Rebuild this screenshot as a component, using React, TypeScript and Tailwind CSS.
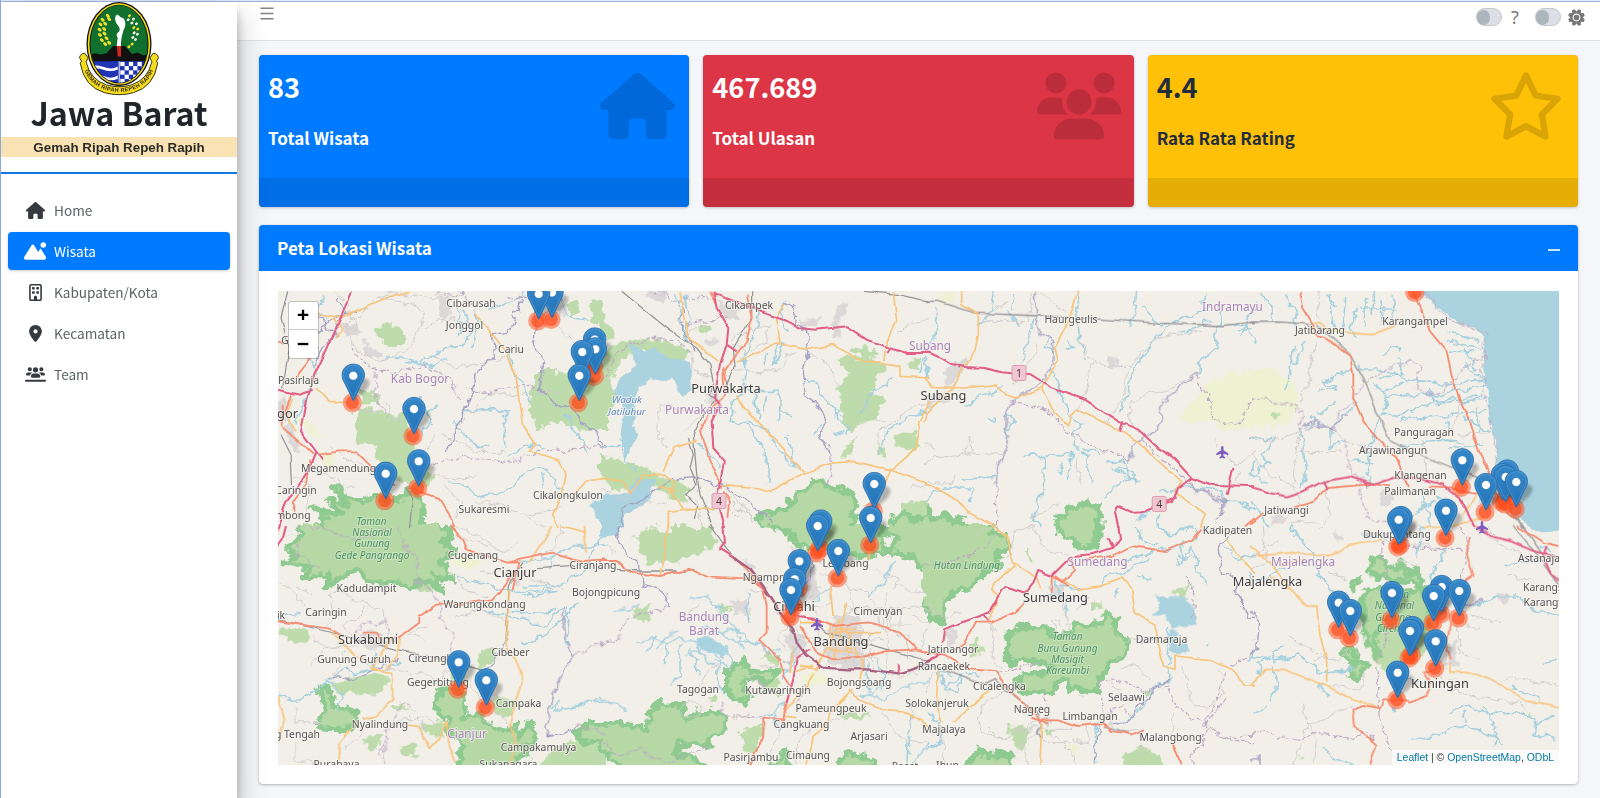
import React from "react";
import {
  FaHouse,
  FaMountainSun,
  FaRegBuilding,
  FaLocationDot,
  FaUsersLine,
  FaUsers,
  FaRegStar,
} from "react-icons/fa6";

type Tile = {
  x: number;
  y: number;
  farm?: string;
  pale?: string;
  forest?: string;
  urban?: string;
  water?: string;
  river?: string;
  border?: string;
  edge?: string;
  minor?: string;
  rail?: string;
  second?: string;
  prim?: string;
  moto?: string;
  ring?: string;
};

/* Each tile holds its geometry at three units per map pixel. */
const tiles: Tile[] = [
  {
    x: 276,
    y: 288,
    farm: "M60 390L110 400 130 440 150 460 90 430ZM130 480L180 500 170 540 140 530Z",
    pale:
      "M300 125L330 110 365 115 388 140 380 172 345 185 318 165ZM240 370L290 360 340 380 390 385 400 430 415 480 440 520 470 560 450 600 380 590 330 540 300 510 310 470 250 465 240 420ZM755 300L790 260 815 240 850 255 910 250 1020 240 1020 420 930 430 850 395 780 430 775 390 760 380ZM870 50L905 40 910 70 880 85ZM940 40L970 35 980 80 965 115 945 80ZM240 310L290 300 310 340 270 355ZM965 530L1020 520 1020 560Z",
    forest:
      "M95 745L150 692 105 660 195 680 155 630 220 655 180 600 255 645 300 620 350 640 420 600 440 650 445 745Z",
    urban:
      "M195 100L240 105 250 130 215 150ZM260 155L290 180 322 195 310 215 270 200ZM490 30L520 25 525 90 500 105ZM20 420L40 400 60 450 80 490 50 480ZM830 40L870 50 860 90 840 80ZM0 340L30 330 40 400 10 400Z",
    water: "M945 650L1020 620 1020 745 960 690Z",
    river:
      "M560 60L575 100 590 140 560 170 500 190 440 215 380 230M600 60L605 130 590 180M330 200L400 215 470 235 520 205M545 410L570 370 640 365 700 368M690 370L685 430 690 480M700 190L710 250 730 280 760 340M560 440L620 480 640 470M700 510L770 470 810 480M850 20L870 90 940 100M520 580L580 600 620 630 700 600 740 560M740 560L790 530 820 560 860 600M870 380L890 430 920 450M100 60L120 90 95 140 130 180 100 220 118 270 90 330 60 400M140 20L120 70 150 100M430 330L460 390 440 440M545 60L560 110 540 150M640 60L700 40 740 20M920 450L925 500M560 440L530 400M800 560L805 600M480 350L450 380 470 410",
    border:
      "M225 180L290 250 350 250 440 230 520 270 560 340M450 540L500 515 600 510 700 525 780 490 860 490 980 470M300 240L300 330 340 400M610 60L560 20 480 15M700 20L780 40 860 40M560 300L620 310 700 300 780 290",
    edge: "M735 30L700 130 650 140 655 200 600 260 590 320 560 380 530 440 510 490M780 70L775 170 800 230 790 300 830 340 880 360 920 400 990 470M240 60L180 90 130 130M185 30L210 70 140 190 110 240M180 150L150 120 120 80",
    minor:
      "M220 110L300 30 400 45 450 70 400 180 300 220 225 170ZM210 345L250 370 310 370M160 470L260 540 330 590M500 460L560 400 640 310 720 320 860 310M110 540L180 580 240 600M300 30L360 10 420 30 540 20M330 340L360 400 460 350M500 590L560 640 540 690M60 560L110 610 90 680M500 440L600 490 690 490M760 680L850 660M240 130L220 60 180 10M460 200L540 240 640 220 700 200M600 640L700 660 800 710M380 560L440 510 480 440M440 120L500 90 560 100M840 120L900 170M470 560L540 570 600 560",
    rail: "M35 10L15 90 40 180 20 300M15 440L45 500 50 600M400 720L410 630 390 600",
    second:
      "M110 75L200 90 260 60 330 30 400 10M600 80L650 140 690 190 720 260 730 350 740 410 780 470 760 490 850 520 870 560 860 610 830 680 850 720M120 300L160 340 220 345M180 150L200 130 170 90M50 330L30 380 60 430M990 570L930 580 890 630",
    prim:
      "M130 500L190 490 240 490 300 550 360 590M20 350L20 420 60 450 110 500M430 610L490 630 520 680 535 720M60 270L100 215 60 170 5 160M100 520L90 590 50 640 60 670M400 600L430 610M45 320L25 380",
    moto: "M225 10L195 90 150 190 115 260 95 330 75 430 120 490 100 540 70 590 30 640 5 720M5 305L70 320 110 305M120 490L140 515",
  },
  {
    x: 600,
    y: 288,
    pale:
      "M0 200L60 160 130 150 240 170 270 190 250 220 180 215 100 180 60 240 30 270 50 330 20 390 0 400ZM0 80L30 110 50 140 0 160ZM0 490L60 520 120 535 210 570 270 600 260 640 220 640 170 600 100 590 60 620 0 560ZM715 210L760 200 780 225 800 205 830 215 860 240 820 280 820 320 860 330 820 400 780 400 760 430 730 410 715 360 720 320 705 300 750 260ZM745 180L800 170 840 195 790 215ZM890 435L940 430 960 470 920 490 890 470ZM725 495L765 450 745 510ZM295 115L325 105 345 130 310 140ZM910 640L1020 640 1020 745 900 745ZM915 230L960 215 965 245ZM830 470L860 480 850 510Z",
    forest: "M500 745L470 690 560 660 590 620 650 580 700 600 750 610 770 650 750 745ZM870 745L880 690 910 680 940 690 990 690 1020 745Z",
    urban:
      "M345 35L420 60 420 100 380 100ZM600 90L660 90 650 110 610 115ZM130 10L210 10 200 40 170 40ZM320 150L350 150 340 180 315 170ZM700 70L750 35 722 90 730 150 690 145ZM320 310L350 310 360 350 330 345Z",
    water:
      "M85 170L130 185 170 180 200 210 270 220 275 300 250 330 215 275 190 280 150 270 120 300 105 350 100 400 110 450 75 510 60 430 75 370 45 310 60 270 110 230ZM0 620L80 620 110 570 170 580 140 640 80 680 60 745 0 745Z",
    river:
      "M230 10L240 90 260 160M475 60L470 130 430 200 435 300 400 340 390 400 440 410 470 450 495 490 505 580M440 400L500 430 540 490 590 545M460 310L540 310 540 370 570 380M500 320L490 370M440 290L470 350 475 390M540 350L535 400M550 30L545 120 570 130M530 170L520 240 550 170M620 270L670 320 700 360 730 400 740 440M885 270L840 300 800 330 780 380M970 200L960 250M980 370L900 400 860 430 840 500M290 460L340 510 360 540M0 470L70 480M660 410L645 440M250 20L270 90 250 140M560 440L590 540M60 450L80 520 110 550M500 190L490 240M700 440L730 430",
    border:
      "M0 280L70 180 150 150 230 160 270 190M240 110L380 90M160 10L240 40 330 30M700 500L690 560 680 590",
    edge: "M550 40L580 60 590 110 620 130 625 190 610 250 620 320 660 360 680 390 660 450 700 500M230 570L300 565 380 600 450 650 520 700M60 720L70 660 150 620 220 570M250 50L235 100 290 190",
    minor:
      "M440 200L400 170 410 140 510 110 500 160 450 190M200 480L170 430 180 340 240 370 310 350M400 240L430 240 470 255 540 250 560 200 590 190M840 500L830 440 900 380 940 360 980 350M460 700L400 620 380 590M620 190L680 230 720 300M270 190L280 250 330 270M0 600L100 640 200 650M380 620L450 690M900 130L940 100 990 95M260 130L320 110M300 380L240 440M390 660L430 700M930 600L990 590M290 640L310 710M760 330L830 390 850 400",
    rail:
      "M65 10L200 120 290 180 330 230 340 290 330 320 350 335 310 380 280 440 290 560 300 620 340 720M265 450L280 500 270 540 290 590 260 620 290 650 280 690M455 10L455 90 400 180 405 230 380 290M795 10L900 20 960 35 990 40",
    second:
      "M250 80L265 150 330 200 355 220M410 220L440 210 530 165 620 185 700 170 760 205 800 220 900 235 900 265 990 270M880 10L890 100 860 170 855 220M550 50L530 90 540 165M410 320L430 360 500 430 540 470 610 550M610 555L700 525 760 520 870 545 990 590M370 590L480 600 510 610 580 570 610 555M990 340L960 400 950 480 870 550 850 600M190 550L220 480 290 460M0 570L70 580 90 620 130 560 190 560 220 580 215 610 250 660 340 665M205 720L205 670 290 660M240 10L250 80M180 595L230 610",
    prim: "M440 20L455 90 440 160 400 210 370 260 375 320 330 370 300 430 310 460 330 520 350 560 365 600M370 610L390 640 385 690M370 240L380 280M330 10L345 40",
    moto: "M340 10L350 60 385 120 380 170 360 230 350 290 345 330 360 350 335 400 340 480 375 520 365 580 350 610 360 660 375 720M340 15L480 70 560 100 600 120 650 125 740 115 800 155 870 180 920 195 990 195M380 170L410 190M865 195L875 180",
  },
  {
    x: 925,
    y: 288,
    farm:
      "M760 380L820 340 850 290 900 260 960 250 990 300 990 420 900 430 850 400 800 410ZM40 20L80 15 90 45 50 50Z",
    forest:
      "M395 695L440 660 480 645 520 660 530 745 400 745ZM-30 700L15 665 25 700 40 690 60 680 80 700 110 695 130 715 210 745 -30 745Z",
    urban: "M75 235L95 215 125 215 110 260 70 300 50 260ZM548 210L580 208 580 232 550 232ZM0 330L60 310 80 340 20 355 0 350Z",
    river:
      "M35 50L30 150 10 180M210 10L200 70 165 110M240 60L280 110M330 90L310 150 290 220M270 20L260 60M460 10L455 70 460 150 490 210M430 160L450 180 425 188M635 10L630 60 610 120M650 60L700 110 780 90 860 50M590 370L610 300 640 220 690 150 740 110M890 60L870 180 820 230 820 260M950 150L970 80 990 70M940 130L990 120M380 250L410 320 430 380 470 410 440 440 450 480M300 505L410 500 440 490 430 570M450 480L490 500 500 580M560 540L600 560 640 580 600 570 540 630M570 540L630 550 630 590M360 505L355 600 325 700 350 720M240 370L265 400 245 440M120 350L180 320 240 290M0 640L50 600 140 600 140 640M700 610L800 600 890 610 900 650M900 640L950 640 990 670M700 680L700 720M110 575L210 565M380 150L360 180 390 190M760 130L800 130 830 100 860 100M0 200L10 280M190 395L210 390M920 110L960 110 990 160M840 20L830 50M410 520L400 560M470 480L530 500M540 525L600 520 610 560M990 510L980 560M640 690L670 680",
    border:
      "M260 340L370 370 430 430 500 470 610 518M815 260L830 310 855 315 860 390 890 405 940 410 960 370 990 320M650 460L690 500 760 550 800 600 900 630 870 720M215 600L215 720",
    edge: "M330 10L335 80 345 130 390 160 380 240 340 290 260 340 245 360 250 400 240 490 220 530 205 565 215 600M610 518L625 470 650 455 700 420 705 350 750 310 815 260M800 600L900 640 880 690",
    minor:
      "M510 215L530 235 620 235 650 190 700 150 830 130M505 215L480 310 455 370M620 420L615 340 740 300 820 255M610 240L590 340 545 405M340 10L430 85M455 150L510 215M0 530L30 510 120 500 240 490M165 100L310 100 320 10M950 550L920 600M455 490L450 540 470 590M120 500L130 450 145 490 110 500M0 460L30 490M0 580L80 590 90 560M860 460L920 510 930 540 990 490M240 40L180 90M330 170L340 190 310 230 270 290M320 690L400 650",
    rail: "M0 40L40 40 150 75 330 83 520 93 700 105 890 113 990 102",
    second:
      "M110 10L110 50 160 80 160 140 150 190 120 230 90 290 40 340 5 380 0 400M0 270L20 295 120 300 210 290 240 320 270 330 350 300 370 340 385 375 430 415 440 380 455 365 540 405 640 460 700 520 770 580 750 610 800 650 840 680 830 720M460 10L430 100 390 180 400 220 350 300M0 585L50 610 100 640 130 675 210 715",
    prim: "M990 690L960 715",
    moto: "M0 190L40 205 80 228 120 237 180 240 230 253 320 262 380 300 480 335 580 400 640 425 700 480 740 505 800 570 850 590 990 595M800 570L760 600 740 640 690 655 650 670 620 672 580 655 570 670 580 720M595 400L585 430M925 540L915 580 905 620M100 228L105 242M720 640L755 625",
  },
  {
    x: 1250,
    y: 288,
    farm: "M0 240L60 240 130 280 140 330 120 410 40 420 0 400Z",
    pale: "M60 380L80 370 80 395Z",
    urban: "M390 610L420 605 430 650 400 655 385 635ZM60 690L110 680 105 705 70 710ZM680 590L740 600 730 660 690 650Z",
    water:
      "M490 -30L510 10 550 45 600 90 650 115 705 140 697 240 713 300 718 400 742 470 735 540 760 640 815 690 850 745 960 745 960 -30Z",
    river:
      "M370 10L370 80M400 40L395 120M430 20L425 110M350 30L340 120M320 150L300 130 320 60M290 30L280 130M240 20L250 120M130 60L140 120M590 130L690 160M590 160L695 180M600 190L670 190M640 230L700 270M390 240L480 275 600 290 710 270M400 310L480 275M370 290L410 320 400 380M410 325L560 320 710 290M390 380L450 385 520 350 700 320M450 400L700 370M320 240L380 240 450 260M210 300L260 310 220 280 300 245M390 200L430 180 450 190M200 380L260 340M240 430L240 480 290 460M300 520L370 520M130 180L110 310M640 390L720 430M570 460L610 460M600 430L590 400M110 20L130 60M30 20L60 40 70 100M0 460L80 450 40 500 60 520 10 560 50 590M150 420L170 560 160 600M450 470L640 460M520 600L540 720M480 700L520 640M560 620L600 680M360 600L350 520 390 390M0 640L60 720M330 60L440 60M640 180L690 250M540 310L560 350 710 330M260 400L300 370 320 340M170 160L130 230M230 20L260 60M450 210L455 260 380 270M170 390L190 400 180 420M600 480L700 470M500 660L560 640M20 40L0 90M680 360L690 430",
    border:
      "M510 10L600 90 705 140 697 240 718 400 745 480 740 540M700 210L640 240 600 290 530 325 500 300 510 240 480 215 420 240 350 280 320 310 300 350 265 370 250 430 210 410 150 420 155 370 100 345 10 330M290 450L290 540 340 570 330 620 350 690 440 710",
    edge: "M250 430L200 400 160 410M300 380L260 400 240 430",
    minor:
      "M205 10L205 100M175 270L200 160M0 455L60 460 150 430 130 560 150 660M230 410L290 460 360 480M620 440L720 430M0 500L60 560 150 600M380 110L410 60M640 330L600 440M150 490L270 490M230 600L240 680 210 720M175 270L150 350M520 450L530 560M120 710L200 700",
    rail: "M0 103L90 102 190 110M200 110L240 145 300 200 350 290 380 370 420 460 480 490 560 520 700 575 780 660 820 720M760 660L830 720",
    second: "M190 105L210 100 230 125 300 135 370 140 440 110M520 715L590 715 700 690M640 680L680 620",
    prim: "M490 10L510 60 540 130 590 190 605 260 630 340 660 400 690 500 720 560 740 620M150 10L160 60 190 110 200 145 225 150 300 205 310 260 310 330 340 400 400 470 440 510 460 560 480 600M540 595L600 598 700 620M130 660L190 640 230 600 350 590 380 590 420 595M0 710L40 675",
    moto: "M0 595L60 615 110 625 160 610 220 580 300 567 340 580 370 590 430 570 500 570 580 590 630 630 660 690 675 720M220 580L230 605M340 580L350 592",
  },
  {
    x: 276,
    y: 526,
    farm: "M510 80L620 100 610 130 540 120ZM370 40L430 50 440 90 400 100Z",
    pale:
      "M5 310L60 305 105 315 90 350 40 340ZM160 480L230 455 310 445 345 465 320 500 230 505 180 495ZM780 745L820 680 900 640 960 630 1020 640 1020 745ZM610 380L660 365 650 420 610 420ZM440 590L500 580 500 640 450 620ZM370 660L420 650 420 690 380 685ZM660 510L730 530 700 570 650 560ZM340 540L380 530 400 550 370 560ZM260 640L320 620 310 670 270 670ZM420 170L450 160 470 200 430 200ZM520 440L560 430 570 480 530 480Z",
    forest:
      "M60 -30L75 30 30 60 60 80 20 110 100 125 90 155 165 145 145 185 240 130 290 175 350 165 400 185 440 160 500 200 475 150 535 165 495 100 540 80 500 50 530 20 450 -30ZM130 490L150 480 160 500 180 540 210 550 245 560 240 590 225 610 150 610 120 590 150 560ZM480 500L540 480 570 520 560 580 600 560 640 590 680 620 720 600 730 630 760 590 780 640 750 660 760 690 720 700 700 745 540 745 560 660 510 610 520 580 480 560ZM900 620L940 590 970 590 1010 600 1010 640 920 650Z",
    urban: "M240 320L290 315 340 340 330 370 260 360ZM690 130L740 130 730 170 700 175Z",
    river:
      "M5 510L60 525 110 500 160 460 200 430 230 440 290 430 320 440 380 405M990 0L960 60 930 130 870 170 840 180 740 180M740 210L840 200M860 240L800 300 740 280 630 255M870 240L880 320 870 360M830 545L850 520 840 550 900 540 940 520 990 530M540 150L640 180 720 200 830 190M990 60L930 60 860 70 820 120M730 360L830 310 910 230M0 270L65 265M740 110L800 100 860 90M710 250L760 270 840 250M150 460L200 510 180 550M290 380L300 430",
    border:
      "M420 160L480 220 500 290 530 330 530 380M240 340L250 290 300 300 330 280 340 340 370 330M885 390L990 350M360 0L410 90 430 160M320 717L340 590 380 540 400 540M70 0L60 80 130 130M900 600L990 620M100 0L240 40 330 10M310 690L330 630",
    edge: "M160 450L230 460 300 430 370 400M860 240L870 340 885 390M885 390L830 500 820 570 810 630 870 620 900 600M690 340L650 410 610 440",
    minor:
      "M150 310L180 260 160 210 190 190M170 200L290 240 320 250 330 320M60 540L60 590 140 590M110 330L130 360 250 360M60 640L60 700 110 717M540 150L560 190 640 210M450 300L390 320 440 340M210 380L180 430 170 460M720 600L620 540 580 460M860 0L840 60 790 100M560 30L620 60 700 80 720 50M540 270L620 250 700 290M0 160L60 210 100 270M200 360L140 370 100 430M400 450L440 440 480 470 520 430M230 340L210 300 270 240M200 680L260 620M340 590L440 570 480 600M110 200L60 180M600 130L660 140M530 0L600 20 650 60M400 540L440 590 440 650M620 500L600 540 640 590M740 150L860 190M270 410L350 430 400 440",
    rail: "M5 280L150 315 360 370 450 390 550 410 620 430M780 125L900 118M740 110L700 180 690 340",
    second:
      "M165 320L240 390 260 400M350 330L310 390 290 430 350 440 350 520 300 570 260 580M240 590L190 650 185 717M375 335L360 390 330 430M390 600L430 605 460 665 490 640 510 590 520 660 540 710M700 190L690 360 720 400 740 460 720 520 700 600 720 640 700 717M830 0L800 50 760 110M925 0L930 80M5 510L25 580 10 640M860 0L930 20",
    prim: "M5 285L100 300 160 307 200 330M370 335L430 290 430 270 490 230 540 230M540 235L650 220 690 180 720 130M525 0L560 40 570 70 690 110 830 80 920 105M690 110L730 110 710 190M260 320L300 320 310 340M0 20L10 10M920 105L990 100",
    moto: "M30 0L20 40 5 60",
  },
  {
    x: 600,
    y: 526,
    farm: "M600 450L660 440 700 470 620 480ZM200 600L240 590 220 630Z",
    pale:
      "M100 40L130 10 160 0 190 20 230 -8 290 10 330 0 350 50 290 90 230 110 140 110 120 60ZM700 565L810 560 815 575 740 580ZM410 615L490 590 490 630 460 680 430 660ZM360 230L400 240 370 260ZM480 450L540 460 540 510 490 500ZM330 510L350 510 350 530 330 530ZM100 250L160 240 140 290 105 285ZM480 390L540 390 530 420Z",
    forest:
      "M470 -30L530 10 570 20 600 60 650 70 720 50 770 90 860 80 840 30 870 -30ZM830 -30L850 10 900 40 860 80 930 90 960 120 1020 140 1020 -30ZM380 440L430 400 450 430 480 440 540 430 530 450 500 470 460 455 430 460 430 490 450 510 440 530 400 520 380 500ZM-30 600L60 590 140 610 150 560 180 530 240 540 260 580 300 560 340 560 380 570 370 610 330 640 330 660 240 650 220 680 270 690 340 745 80 745 0 660 -30 640ZM710 745L720 700 750 680 780 690 830 700 820 745ZM530 700L560 680 570 745 510 745Z",
    urban:
      "M700 270L780 270 790 430 720 430 670 390ZM560 320L620 330 600 400 570 380ZM400 225L450 220 450 260 400 260ZM430 100L470 130 440 140ZM570 60L620 90 660 200 630 230Z",
    water: "M0 0L60 0 50 30 0 35ZM290 340L320 330 350 350 380 360 370 400 340 380 300 370Z",
    river:
      "M105 350L150 340 200 350 240 340 300 350 360 360M200 350L190 420M240 350L240 450 210 480M290 340L300 380 340 420M320 350L360 400 350 440 370 500M350 320L420 310 410 350 440 370M380 360L400 400 390 430M260 220L330 210 400 300 460 350 540 380M0 515L75 550M480 580L560 530M520 560L540 620M780 510L850 520 900 490 990 460M40 260L120 240M930 560L920 717M990 650L940 717M170 330L140 380M300 300L350 310 380 340 480 350M360 240L350 270 390 280M270 370L290 400 290 450M540 460L590 400M800 400L810 500M840 400L850 490M790 520L850 480M440 210L450 290M560 420L600 340M880 110L840 180 800 210M700 180L640 230M240 320L200 330 170 370M310 360L260 390M340 400L380 430",
    border:
      "M0 355L60 330 80 280 180 250 200 200M370 530L380 570 430 570 480 575M0 640L60 690 120 670 200 710 330 660M480 360L560 410 580 400M500 480L440 450M590 540L620 480",
    edge: "M50 0L60 60 120 110 130 180 180 190 200 240M640 90L630 150 600 200",
    minor:
      "M20 60L40 80 10 110M240 550L270 520 300 540 290 570 250 570ZM280 500L320 440 350 420M660 140L700 160 690 230 640 250M660 180L620 230 670 290M740 150L760 230 720 290M700 110L750 190 800 190 840 290M780 300L790 440M810 310L820 430M830 300L920 330 930 400M860 260L860 430M740 300L740 420M760 310L765 430M690 320L780 320M690 350L850 340M670 370L840 400M700 290L680 420M600 330L640 340M610 360L660 350M560 240L600 330M520 240L560 300 540 340 560 380M500 190L440 200M650 300L660 390M640 600L600 640 590 717M680 590L760 560M850 560L900 640 980 650M940 520L930 600M880 180L990 200M940 270L990 290 960 370M860 200L870 300 930 300M540 620L500 700M680 130L630 80M600 90L620 160M830 130L900 160 880 190M870 450L960 440M730 240L840 250 990 240M400 580L450 560M300 230L240 280M480 420L540 420M850 300L850 240 900 250 900 310",
    rail: "M330 0L380 70 400 95 460 140 490 180 540 260 580 320M50 130L120 135 230 135M640 290L680 320 860 370 990 405M180 150L280 130",
    second:
      "M205 0L180 150M580 360L570 440M600 420L650 430 700 330 720 280M740 230L700 400M760 350L790 410 780 460M690 300L690 370 770 380M750 490L770 520 850 550 910 555 990 600M760 490L690 560 680 600 640 630 630 680 620 717M550 570L590 575M550 560L620 480 640 440M600 290L650 290M690 180L700 270M810 50L800 120M720 300L750 330 740 370M720 360L760 370M710 310L770 310M580 440L640 420M700 320L840 320",
    prim: "M0 105L50 105 90 140 180 150 270 130 320 155 450 160 490 190 500 240 500 320 480 340 540 400 550 450 570 480 550 580 490 575 490 630 450 717M610 270L700 300 800 290 900 320 950 370 990 380M700 400L800 390 860 375 950 370M600 300L650 380 700 400M360 70L410 100 490 190",
    moto: "M370 0L375 50 360 70 400 95 450 130 480 170 500 200 520 230M630 370L590 400 580 460 560 530M590 270L640 275 660 290M650 405L660 425M895 415L900 440",
    ring: "M400 95L450 130 490 180 540 260 580 310 590 350 620 390 670 425 740 430 800 430 900 442 950 425 990 400",
  },
  {
    x: 925,
    y: 526,
    farm: "M10 180L50 170 40 230 20 250ZM420 650L470 660 450 690Z",
    pale:
      "M245 600L300 595 310 640 290 670 260 650ZM570 745L600 680 640 660 710 690 710 745ZM740 190L790 180 780 210 745 205ZM500 230L530 230 530 250 500 250ZM300 65L312 65 318 105 308 105ZM130 350L160 340 170 380 140 390ZM650 500L680 490 670 520ZM460 510L480 515 475 520ZM360 610L390 610 380 630Z",
    forest:
      "M-60 -30L210 -30 200 20 240 30 255 60 215 90 220 120 160 150 150 180 100 190 60 230 50 290 15 270 -60 130ZM395 -30L525 -30 520 50 490 65 460 65 440 40 400 20ZM250 320L300 300 340 310 370 300 380 330 440 320 460 290 490 300 530 290 545 260 580 280 570 310 610 350 600 380 580 400 550 410 540 440 520 460 520 500 440 490 420 460 400 460 380 500 310 500 270 480 290 450 340 440 370 440 380 420 310 400 250 410ZM115 745L140 700 160 670 180 690 230 680 260 690 260 745Z",
    urban: "M60 320L100 310 100 350 70 360ZM370 180L420 170 420 210 380 210ZM350 570L380 580 370 600Z",
    water: "M695 205L730 215 740 208 780 210 800 240 815 295 790 300 740 310 720 270 680 275 705 250ZM735 310L760 320 755 360 780 350 795 375 760 385 730 370Z",
    river:
      "M0 560L40 580 50 640 0 680M40 440L60 490 110 450 100 500 60 490M600 110L660 80 740 70 780 50M640 0L650 40 700 60M700 0L740 30 800 0M750 90L760 120 800 70 830 150 840 180M630 150L680 155M580 190L572 215M520 180L540 150 620 130 670 90M720 300L740 400 730 460M740 460L700 480 680 500 640 560 620 580 560 600M510 600L515 717M900 60L940 100 990 90M410 180L470 190M430 230L425 270M650 350L700 340M840 360L850 350M760 80L780 100 800 90M50 470L40 440 80 450M120 440L170 450M780 100L770 60 820 40 810 0M390 170L410 220 370 200M990 370L975 410",
    border:
      "M0 120L100 100 200 50 220 0M220 440L310 420 350 410M520 460L600 470 660 500 730 480 750 540 810 580 850 600 900 640 990 650M850 600L830 650 800 690 810 717M900 520L870 560 840 590M780 150L810 210 800 270M900 440L870 540 830 600M530 470L530 580 590 540 620 570M360 500L370 560M920 420L960 400 990 370M990 620L900 640",
    edge: "M910 30L880 80 890 140 940 160 930 200 960 240 970 280 990 280M730 460L640 540 630 580 560 600M510 717L520 600",
    minor:
      "M410 200L430 290 440 310M250 100L270 20 320 0M320 0L370 70 430 90M190 290L210 330 200 400 230 430M240 500L170 530 160 580 180 620 220 640 340 590M760 420L790 470 790 520 840 550 900 500M190 610L220 640 340 600M270 680L340 610 440 610M380 620L440 680 450 717M550 560L560 620 640 610M640 610L650 700M400 330L390 290 400 280 405 300M580 430L630 420 680 450M200 0L140 40M740 560L740 640M50 600L60 717M30 440L0 500M450 250L490 220M350 650L440 650M560 470L590 500M290 640L310 717M600 350L640 340M480 590L490 650 440 640M0 250L60 270 110 260M880 430L900 500",
    rail: "M0 415L60 430 180 475 210 460 240 490 340 560 350 600 335 620 350 640M540 600L620 625",
    second:
      "M195 0L250 30 255 80 270 120 210 170 200 190 220 210 200 260 190 290M270 110L340 160 350 190M410 160L460 190 520 180 590 155 620 190 630 260 690 295 700 350 715 420 750 430 750 390 850 400 920 430 960 480 990 480M905 40L940 90 990 140M40 430L35 510 50 590M80 590L140 540 200 490M350 590L345 717",
    prim: "M830 10L800 45 720 75 620 60 560 90 480 100M440 90L450 130 410 170 380 150 380 200M300 230L270 260 200 290 150 290 120 350 90 370M0 375L60 390 130 430 210 435 250 490 330 560 350 590M350 580L400 580 460 600 540 590 560 615 620 625 660 610M740 650L770 717M390 150L430 180M320 575L370 590",
    moto: "M580 0L585 40 565 65 500 85 440 90 410 120 380 150 340 135 325 170 300 200 240 180 220 210 190 260 120 285 60 310 55 350M0 405L50 385M550 40L565 65M175 265L190 285",
  },
  {
    x: 1250,
    y: 526,
    pale:
      "M345 230L380 195 420 210 450 190 500 190 530 220 540 330 530 380 480 410 420 440 390 420 370 390 345 360ZM140 690L165 690 150 702ZM835 565L850 565 845 580Z",
    forest:
      "M335 230L345 200 380 180 400 200 440 190 470 200 520 190 535 230 535 300 500 330 400 300 370 330 390 390 350 350ZM370 100L400 95 410 120 440 130 450 110 480 150 500 130 520 160 510 180 480 170 460 160 430 170 410 150 380 155 360 130ZM305 165L330 155 330 175 310 190ZM280 370L305 370 320 410 350 410 320 460 300 450 310 420 280 390Z",
    urban: "M250 10L275 40 255 50ZM600 350L625 350 620 420 595 420ZM740 210L770 195 780 220 760 235ZM540 400L600 410 570 440Z",
    water: "M800 -30L840 5 870 18 900 18 960 5 960 -30ZM420 540L440 540 435 565 425 565Z",
    river:
      "M120 0L190 80 200 150 240 190 260 230M0 140L30 160 110 130M0 390L60 400 150 390 210 440 310 430M340 20L420 50 460 60M600 30L570 100 540 160M520 0L500 90M760 120L800 110 860 100M660 240L740 210 800 210 850 250 920 270M860 60L900 80 920 110M480 640L540 630 640 600 700 615 750 640 730 655M600 560L660 540 700 555 740 565 820 560 860 590 910 570M640 590L650 560M860 590L850 630 920 640M220 660L240 690 310 717M70 420L80 470 60 520M0 560L50 540M780 480L870 520M430 440L520 470M880 410L926 400M760 660L700 540M540 150L560 200M200 480L240 510M100 360L60 370 80 410M30 440L20 410 60 390M460 0L470 60",
    border:
      "M400 50L410 200 415 300 400 380 380 400 385 540 400 600 410 640 440 690M0 620L60 625 140 640 210 620 310 640 340 620 380 640M630 0L650 60 640 130 630 170M350 20L430 30 500 70 640 70",
    edge: "M0 260L30 280 20 370 0 380M0 700L30 690 30 717M640 240L700 220",
    minor:
      "M620 290L630 380 690 400M590 390L570 440 600 490 660 510 800 530 830 550M240 480L330 490 350 440M310 540L220 580 170 600 200 640 190 700M770 150L840 160M750 470L780 450 926 480M660 270L750 290M240 140L300 160M160 530L170 600 130 717M40 0L50 110 0 140M540 210L600 260M600 470L640 430M120 330L230 400M0 340L30 330M440 100L500 120M700 300L640 300M460 60L530 60 590 80M180 400L270 400 310 350M710 0L760 60 850 90M0 100L90 40",
    rail: "M790 0L840 60 900 140 926 180M820 0L880 90",
    second:
      "M20 90L130 80 200 90 270 80 300 55 400 40M0 480L50 430 100 430 150 450 230 480 300 515 380 545M170 240L200 240 210 330 230 400 230 470M0 60L60 110 130 200 170 240M600 410L600 440 680 445 760 480 830 525 926 545M120 190L60 150M90 120L160 100",
    prim: "M660 30L650 80 670 150 640 170 610 180M600 290L590 370 600 400M310 550L340 540 390 550 400 520 440 520 480 530 530 510 540 470 520 440 560 430M310 550L315 600 380 660 360 717M800 0L850 30 880 50 926 60",
    moto: "M680 5L720 30 780 45 850 75 926 95M890 60L880 90 900 140 926 165",
  },
];

type Layer = {
  k: keyof Tile;
  fill?: string;
  stroke?: string;
  w?: number;
  dash?: string;
  filter: string;
  op?: number;
};

const layers: Layer[] = [
  { k: "farm", fill: "#eef2d3", filter: "url(#shore)" },
  { k: "urban", fill: "#d6d3d3", filter: "url(#shore)", op: 0.8 },
  { k: "pale", fill: "#bddbab", filter: "url(#shore)" },
  { k: "forest", fill: "#b5d8a5", stroke: "#8fcb90", w: 16, filter: "url(#shore)" },
  { k: "water", fill: "#aad3df", filter: "url(#coast)" },
  { k: "river", stroke: "#a5d1df", w: 4.8, filter: "url(#stream)" },
  { k: "minor", stroke: "#cfcbcb", w: 2.8, filter: "url(#stream)" },
  { k: "border", stroke: "#bdaac4", w: 3.6, dash: "14 5", filter: "url(#stream)" },
  { k: "edge", stroke: "#a3a2c4", w: 4.2, filter: "url(#stream)" },
  { k: "rail", stroke: "#959494", w: 3.8, filter: "url(#road)" },
  { k: "second", stroke: "#f9c47b", w: 5, filter: "url(#road)" },
  { k: "prim", stroke: "#f68f73", w: 5.6, filter: "url(#road)" },
  { k: "moto", stroke: "#e25f85", w: 6.2, filter: "url(#road)" },
  { k: "ring", stroke: "#a8617f", w: 7, filter: "url(#road)" },
];

const roughness = [
  { id: "shore", freq: "0.11", oct: 3, scale: 13, seed: 4 },
  { id: "coast", freq: "0.09", oct: 3, scale: 7, seed: 9 },
  { id: "stream", freq: "0.085", oct: 3, scale: 11, seed: 7 },
  { id: "road", freq: "0.06", oct: 2, scale: 4.5, seed: 2 },
];

type Kind = "town" | "city" | "region" | "park" | "lake";
type Label = [string, number, number, Kind?, ("start" | "middle" | "end")?];

const labels: Label[] = [
  ["Cibarusah", 471, 306.5],
  ["Jonggol", 464.5, 329],
  ["Cariu", 511, 353],
  ["G", 285, 344],
  ["Pasirlaja", 298.5, 383.5],
  ["Kab Bogor", 420, 382.5, "region"],
  ["gor", 287.5, 418, "city"],
  ["Megamendung", 338.5, 472],
  ["Caringin", 296, 493.5],
  ["mbong", 293, 519],
  ["Cikalongkulon", 568, 499],
  ["Sukaresmi", 484, 513],
  ["Taman", 371.5, 525, "park"],
  ["Nasional", 372, 536, "park"],
  ["Gunung", 372, 547, "park"],
  ["Gede Pangrango", 372, 558.5, "park"],
  ["Cikampek", 749, 308.5],
  ["Purwakarta", 726, 393, "city"],
  ["Purwakarta", 697, 414, "region"],
  ["Waduk", 627, 403, "lake"],
  ["Jatiluhur", 627, 415, "lake"],
  ["Subang", 930, 350, "region"],
  ["Haurgeulis", 1071, 322.5],
  ["Subang", 943.5, 399.5, "city"],
  ["Indramayu", 1232.5, 310.5, "region"],
  ["Kadipaten", 1227.5, 534],
  ["Karangampel", 1415, 325],
  ["Jatibarang", 1320, 333.5],
  ["Panguragan", 1424, 435.5],
  ["Arjawinangun", 1393, 453.5],
  ["Klangenan", 1420.5, 479],
  ["Palimanan", 1410, 495],
  ["Jatiwangi", 1286.5, 514],
  ["Cugenang", 473, 558.5],
  ["Cianjur", 515, 577, "city"],
  ["Ciranjang", 593, 569],
  ["Kadudampit", 366.5, 592],
  ["Bojongpicung", 606, 595.5],
  ["Warungkondang", 484.5, 607.5],
  ["Caringin", 326, 616],
  ["ik", 281, 618.5],
  ["Sukabumi", 368, 643.5, "city"],
  ["Gunung Guruh", 354, 663],
  ["Cibeber", 510.5, 656],
  ["Cireunghas", 436, 662],
  ["Gegerbitung", 438, 686],
  ["Campaka", 518.5, 706.5],
  ["Nyalindung", 380, 728],
  ["g Tengah", 297.5, 737.5],
  ["Cianjur", 467, 738, "region"],
  ["Campakamulya", 538.5, 751],
  ["Purabaya", 336.5, 768],
  ["Sukanagara", 508.5, 768],
  ["Ngamprah", 769, 580.5],
  ["Cimahi", 794, 611, "city"],
  ["Lembang", 845.5, 567],
  ["Cimenyan", 878, 614.5],
  ["Bandung", 841, 645.5, "city"],
  ["Bandung", 704, 621, "region"],
  ["Barat", 704, 635, "region"],
  ["Bojongsoang", 859, 686],
  ["Tagogan", 698, 692.5],
  ["Kutawaringin", 778, 694],
  ["Pameungpeuk", 831, 712],
  ["Cangkuang", 801.5, 727.5],
  ["Solokanjeruk", 937, 707],
  ["Majalaya", 944, 732.5],
  ["Arjasari", 869, 740],
  ["Pasirjambu", 751, 761],
  ["Cimaung", 808, 759],
  ["Rancaekek", 944, 669.5],
  ["Pacet", 905, 770],
  ["Hutan Lindung", 967, 569, "park"],
  ["Sumedang", 1097.5, 566, "region"],
  ["Sumedang", 1055.5, 602, "city"],
  ["Jatinangor", 953, 653],
  ["Taman", 1067.5, 640, "park"],
  ["Buru Gunung", 1067.5, 651.5, "park"],
  ["Masigit", 1067.5, 663, "park"],
  ["Kareumbi", 1067.5, 674, "park"],
  ["Darmaraja", 1161.5, 642.5],
  ["Cicalengka", 999.5, 690],
  ["Nagreg", 1032, 712.5],
  ["Limbangan", 1090, 720],
  ["Selaawi", 1126.5, 701],
  ["Malangbong", 1170.5, 740.5],
  ["Ibun", 947.5, 769],
  ["Dukupuntang", 1397, 537.5],
  ["Majalengka", 1303, 566, "region"],
  ["Majalengka", 1267.5, 586, "city"],
  ["Astanajapura", 1518, 562, "town", "start"],
  ["Karangsembung", 1523, 591, "town", "start"],
  ["Karangwareng", 1523.5, 606, "town", "start"],
  ["Taman", 1394, 597.5, "park"],
  ["Nasional", 1394.5, 609, "park"],
  ["Gunung", 1393, 620.5, "park"],
  ["Ciremai", 1394, 631.5, "park"],
  ["Kuningan", 1440, 687.5, "city"],
];

const labelStyle: Record<Kind, string> = {
  town: "fill-[#555353] text-[10.4px]",
  city: "fill-[#3c3b3b] text-[12.8px]",
  region: "fill-[#a983b8] text-[11.8px]",
  park: "fill-[#4a9163] text-[10px] italic",
  lake: "fill-[#6389c2] text-[9.8px] italic",
};

/* Position of each marker's white dot. */
const markers: [number, number][] = [
  [1415.7, 265.5],
  [552, 292.5],
  [538.7, 294],
  [594.7, 339.5],
  [595.3, 349.3],
  [582.3, 352],
  [353.3, 375.7],
  [579.3, 375.7],
  [414, 409],
  [1462.3, 460.3],
  [418.7, 461.3],
  [1507.3, 471.5],
  [385.7, 473.7],
  [1502.5, 475],
  [1505.7, 477],
  [1516.3, 482],
  [874.3, 484],
  [1486, 485],
  [1446, 510.7],
  [870.7, 518],
  [1401, 518],
  [1398.7, 519.7],
  [820.7, 521.5],
  [817.7, 526],
  [838.3, 551],
  [799.3, 561.3],
  [794.7, 579.3],
  [1441.7, 587],
  [791, 590],
  [1459.3, 591],
  [1392, 593],
  [1433.7, 596],
  [1338.7, 602.7],
  [1350.3, 611],
  [1412.5, 628],
  [1410, 631],
  [1435.7, 641.3],
  [458.7, 662.3],
  [1397.7, 672.7],
  [486.3, 680.3],
];

const planes: [number, number][] = [
  [1222.3, 452],
  [817, 624],
  [1482, 527],
];

const shields: [string, number, number][] = [
  ["1", 1019, 373],
  ["4", 719, 501],
  ["4", 1159.3, 504],
];

function MapCanvas() {
  return (
    <svg viewBox="278 291 1281 474" className="block h-full w-full" role="img" aria-label="Peta">
      <defs>
        {roughness.map((r) => (
          <filter
            key={r.id}
            id={r.id}
            filterUnits="userSpaceOnUse"
            x="258"
            y="271"
            width="1321"
            height="514"
            colorInterpolationFilters="sRGB"
          >
            <feTurbulence type="fractalNoise" baseFrequency={r.freq} numOctaves={r.oct} seed={r.seed} result="n" />
            <feDisplacementMap in="SourceGraphic" in2="n" scale={r.scale} xChannelSelector="R" yChannelSelector="G" />
          </filter>
        ))}
        <filter id="soft" x="-50%" y="-50%" width="200%" height="200%">
          <feGaussianBlur stdDeviation="1.7" />
        </filter>
        <linearGradient id="pin" x1="0" y1="0" x2="0" y2="1">
          <stop offset="0" stopColor="#3688c9" />
          <stop offset="1" stopColor="#2272b6" />
        </linearGradient>
        <clipPath id="cell">
          <rect x="-3" y="-3" width="996" height="724" />
        </clipPath>
        <clipPath id="lastRow">
          <rect x="-3" y="-3" width="996" height="760" />
        </clipPath>
      </defs>
      <rect x="278" y="291" width="1281" height="474" fill="#f2efe9" />
      {layers.map((l) => (
        <g key={l.k} filter={l.filter} opacity={l.op ?? 1}>
          {tiles.map((t, i) =>
            t[l.k] ? (
              <g key={i} transform={`translate(${t.x} ${t.y}) scale(.33333)`}>
                <path
                  d={String(t[l.k])}
                  fill={l.fill ?? "none"}
                  stroke={l.stroke ?? "none"}
                  strokeWidth={l.w}
                  strokeDasharray={l.dash}
                  strokeLinejoin="round"
                  clipPath={t.y > 500 ? "url(#lastRow)" : "url(#cell)"}
                />
              </g>
            ) : null,
          )}
        </g>
      ))}
      {shields.map(([n, x, y]) => (
        <g key={n + x}>
          <rect x={x - 7} y={y - 7.5} width="14" height="15" rx="2" fill="#efc7d3" stroke="#d98fa6" strokeWidth=".8" />
          <text x={x} y={y + 3.8} textAnchor="middle" className="fill-[#5c3542] font-['Noto_Sans'] text-[10.5px]">
            {n}
          </text>
        </g>
      ))}
      {planes.map(([x, y]) => (
        <path
          key={x}
          transform={`translate(${x} ${y})`}
          fill="#7d5cc0"
          d="M0-6C1.2-6 1.2-4.8 1.2-4V-1.8L6 1.4V3.2L1.2 1.8V4L2.8 5.2V6.4L0 5.7L-2.8 6.4V5.2L-1.2 4V1.8L-6 3.2V1.4L-1.2-1.8V-4C-1.2-4.8-1.2-6 0-6Z"
        />
      ))}
      {labels.map(([s, x, y, k = "town", a = "middle"], i) => (
        <text
          key={i}
          x={x}
          y={y}
          textAnchor={a}
          paintOrder="stroke"
          stroke="#f7f5f0"
          strokeOpacity={k === "park" ? 0.35 : 0.75}
          strokeWidth="1.8"
          strokeLinejoin="round"
          className={`font-['Noto_Sans',sans-serif] ${labelStyle[k]}`}
        >
          {s}
        </text>
      ))}
      {markers.map(([x, y], i) => (
        <g key={i} transform={`translate(${x - 1} ${y + 27})`}>
          <circle r="9.6" fill="#ff5a2b" opacity=".55" />
          <circle r="6.6" fill="#ff4a18" opacity=".65" />
        </g>
      ))}
      {markers.map(([x, y], i) => (
        <path
          key={i}
          transform={`translate(${x} ${y + 24})`}
          d="M0 0L6-19C9-23 17-22 16-16C15-10 6-3 0 0Z"
          fill="#000"
          opacity=".26"
          filter="url(#soft)"
        />
      ))}
      {markers.map(([x, y], i) => (
        <g key={i} transform={`translate(${x} ${y})`}>
          <path
            d="M0-11.6C-6.6-11.6-11.2-6.6-11.2-.6C-11.2 3-9.6 5.6-7.8 9L0 25.2L7.8 9C9.6 5.6 11.2 3 11.2-.6C11.2-6.6 6.6-11.6 0-11.6Z"
            fill="url(#pin)"
            stroke="#2a6fad"
            strokeWidth=".9"
          />
          <path
            d="M0 22.4L-6.7 8.4C-8.4 5.2-9.9 2.6-9.9-.6C-9.9-5.9-5.8-10.3 0-10.3C5.8-10.3 9.9-5.9 9.9-.6C9.9 2.6 8.4 5.2 6.7 8.4Z"
            fill="none"
            stroke="#5fa3d8"
            strokeOpacity=".55"
            strokeWidth=".9"
          />
          <circle r="4.3" fill="#fff" stroke="#2468a3" strokeOpacity=".5" strokeWidth=".6" />
        </g>
      ))}
    </svg>
  );
}

function Crest() {
  const checks: React.ReactNode[] = [];
  for (let r = 0; r < 6; r++)
    for (let c = 0; c < 7; c++)
      if ((r + c) % 2 === 0)
        checks.push(<rect key={`${r}-${c}`} x={360 + c * 13} y={186 + r * 13} width="13" height="13" fill="#fff" />);
  const left = [
    [322, 46], [306, 58], [300, 72], [297, 88], [298, 104], [304, 120], [314, 132],
    [326, 56], [314, 70], [311, 86], [312, 100], [318, 114], [326, 128],
  ];
  const right = [
    [388, 46], [400, 56], [409, 70], [413, 86], [412, 102], [406, 118], [396, 132],
    [384, 58], [395, 68], [401, 82], [402, 98], [398, 112], [386, 140],
  ];
  return (
    <svg viewBox="230 4 252 286" className="block h-[94px] w-[84px]" role="img" aria-label="Lambang Jawa Barat">
      <defs>
        <clipPath id="oval">
          <ellipse cx="356" cy="132" rx="87" ry="118" />
        </clipPath>
        <path id="motto" d="M247 192Q258 254 318 272Q356 283 394 272Q454 254 465 192" />
      </defs>
      <ellipse cx="356" cy="132" rx="99" ry="128" fill="#111" />
      <ellipse cx="356" cy="132" rx="95" ry="124" fill="#f5dc1d" />
      <ellipse cx="356" cy="132" rx="90" ry="120" fill="#111" />
      <g clipPath="url(#oval)">
        <rect x="260" y="5" width="200" height="180" fill="#12702f" />
        <rect x="260" y="182" width="97" height="80" fill="#1f35b5" />
        <rect x="357" y="182" width="100" height="80" fill="#1f35b5" />
        {checks}
        <rect x="355" y="184" width="3" height="80" fill="#fff" />
        <path
          d="M262 200Q285 192 310 202T352 200V210Q330 218 308 210T262 212ZM268 228Q290 220 312 230T352 228V238Q330 246 310 238T272 240Z"
          fill="#fff"
        />
        <path d="M260 184V172L280 160 300 164 318 160 338 138H374L396 162 412 158 430 166 455 162V184Z" fill="#111" />
      </g>
      <path d="M350 138H362V170H352Z" fill="#d8261c" />
      <path
        d="M349 138L352 112Q344 104 356 94Q362 86 352 74Q340 60 346 46L352 42Q358 50 370 54Q378 66 374 80Q368 92 366 104Q362 116 362 138Z"
        fill="#fff"
      />
      {left.map(([x, y]) => (
        <ellipse key={`${x},${y}`} cx={x} cy={y} rx="7" ry="4.5" transform={`rotate(40 ${x} ${y})`} fill="#f2e02a" />
      ))}
      {right.map(([x, y], i) => (
        <ellipse
          key={`${x},${y}`}
          cx={x}
          cy={y}
          rx="5"
          ry="4"
          transform={`rotate(-40 ${x} ${y})`}
          fill={i % 3 ? "#f4f4e8" : "#f2e02a"}
        />
      ))}
      <path
        d="M236 174Q238 160 252 160L262 174L256 186Q268 240 318 256Q356 268 394 256Q444 240 456 186L450 174L460 160Q474 160 476 174L470 184L474 190Q462 262 400 280Q356 292 312 280Q250 262 238 190L242 184Z"
        fill="#f5dc1d"
        stroke="#111"
        strokeWidth="2.5"
      />
      <text className="fill-[#2a2505] font-['Liberation_Sans'] text-[17px] font-bold">
        <textPath href="#motto" startOffset="50%" textAnchor="middle" textLength="262">
          GEMAH RIPAH REPEH RAPIH
        </textPath>
      </text>
    </svg>
  );
}

const menu = [
  { label: "Home", icon: <FaHouse className="h-[17px] w-[19px]" /> },
  { label: "Wisata", icon: <FaMountainSun className="h-[18px] w-[22px]" />, active: true },
  { label: "Kabupaten/Kota", icon: <FaRegBuilding className="h-[17px] w-[13px]" /> },
  { label: "Kecamatan", icon: <FaLocationDot className="h-[17px] w-[13px]" /> },
  { label: "Team", icon: <FaUsersLine className="h-[17px] w-[21px]" /> },
];

function Toggle() {
  return (
    <span className="flex h-[18px] w-[26px] items-center rounded-full border border-[#c3c7cc] bg-[#dcdfe5]">
      <span className="h-[15px] w-[13px] rounded-full bg-[#adb5bd]" />
    </span>
  );
}

function StatBox({
  value,
  label,
  tone,
  icon,
}: {
  value: string;
  label: string;
  tone: string;
  icon: React.ReactNode;
}) {
  return (
    <div
      className={`flex h-[152px] min-w-0 flex-1 flex-col overflow-hidden rounded shadow-[0_0_1px_rgba(0,0,0,.13),0_1px_3px_rgba(0,0,0,.2)] ${tone}`}
    >
      <div className="flex flex-1 justify-between pl-[9px]">
        <div className="pt-[11px]">
          <div className="text-[27.2px] leading-[40px] font-bold">{value}</div>
          <div className="mt-[20px] text-[17px] leading-[24px] font-bold">{label}</div>
        </div>
        <div className="pt-[17px] text-black/15">{icon}</div>
      </div>
      <div className="h-[29px] bg-black/10" />
    </div>
  );
}

export default function App() {
  return (
    <div className="flex h-[798px] w-[1600px] flex-col overflow-hidden border-l border-[#8ea9d3] bg-[#f4f6f9] font-['Noto_Sans_CJK_SC',sans-serif] text-[#212529]">
      <div className="h-[2px] shrink-0 border-b border-[#9db5dc] bg-[#dfe8f6]" />
      <div className="flex min-h-0 flex-1">
        <aside className="z-10 flex w-[236px] shrink-0 flex-col bg-white shadow-[0_14px_28px_rgba(0,0,0,.25),0_10px_10px_rgba(0,0,0,.22)]">
          <div className="flex h-[172px] shrink-0 flex-col items-center border-b-2 border-[#1279e0]">
            <Crest />
            <div className="mt-[-3px] text-[32.2px] leading-[38px] font-bold whitespace-nowrap">Jawa Barat</div>
            <div className="mt-[6px] h-[20px] w-full bg-[#f9e3b4] text-center font-['Liberation_Sans',sans-serif] text-[13.35px] leading-[21px] font-bold text-[#2b2b26]">
              Gemah Ripah Repeh Rapih
            </div>
          </div>
          <nav className="flex flex-col gap-[3px] px-[7px] pt-[17px]">
            {menu.map((m) => (
              <a
                key={m.label}
                className={
                  m.active
                    ? "flex h-[38px] items-center rounded bg-[#007bff] text-white shadow-[0_1px_3px_rgba(0,0,0,.2)]"
                    : "flex h-[38px] items-center text-[#343a40]"
                }
              >
                <span className="ml-[15px] flex w-[24px] justify-center">{m.icon}</span>
                <span
                  className={
                    m.active ? "mt-px ml-[7px] text-[13.6px]" : "mt-px ml-[7px] text-[13.6px] text-[#5c6166]"
                  }
                >
                  {m.label}
                </span>
              </a>
            ))}
          </nav>
        </aside>
        <div className="flex min-w-0 flex-1 flex-col">
          <header className="flex h-[39px] shrink-0 items-start justify-between border-b border-[#dee2e6] bg-white">
            <svg viewBox="0 0 14 13" className="mt-[5px] ml-[23px] h-[13px] w-[14px]" stroke="#838383" strokeWidth="1.5">
              <path d="M.5 1.2H13.5M.5 6.4H13.5M.5 11.7H13.5" />
            </svg>
            <div className="flex items-center pt-[6px] pr-[15px]">
              <Toggle />
              <span className="ml-[7px] w-[12px] text-center font-['Noto_Sans'] text-[18px] leading-[18px] text-[#7b7b7b]">
                ?
              </span>
              <span className="ml-[14px] flex">
                <Toggle />
              </span>
              <svg viewBox="-10 -10 20 20" className="ml-[7px] h-[17px] w-[17px]">
                {[0, 45, 90, 135, 180, 225, 270, 315].map((a) => (
                  <path key={a} d="M-2.8-6L-1.7-9.8H1.7L2.8-6Z" fill="#777" transform={`rotate(${a + 22.5})`} />
                ))}
                <circle r="5.9" fill="none" stroke="#777" strokeWidth="2.6" />
                <circle r="3.3" fill="#777" />
              </svg>
            </div>
          </header>
          <main className="flex min-h-0 flex-1 flex-col pt-[14px] pr-[22px] pl-[22px]">
            <div className="flex gap-[14px]">
              <StatBox
                value="83"
                label="Total Wisata"
                tone="bg-[#007bff] text-white"
                icon={<FaHouse className="mr-[14px] h-[68px] w-[75px]" />}
              />
              <StatBox
                value="467.689"
                label="Total Ulasan"
                tone="bg-[#dc3545] text-white"
                icon={<FaUsers className="mr-[13px] h-[68px] w-[84px]" />}
              />
              <StatBox
                value="4.4"
                label="Rata Rata Rating"
                tone="bg-[#ffc107] text-[#1f2d3d]"
                icon={<FaRegStar className="mr-[14px] h-[68px] w-[76px]" />}
              />
            </div>
            <section className="mt-[18px] flex h-[559px] flex-col overflow-hidden rounded bg-white shadow-[0_0_1px_rgba(0,0,0,.2),0_1px_3px_rgba(0,0,0,.25)]">
              <div className="flex h-[46px] shrink-0 items-center justify-between bg-[#007bff] pr-[18px] pl-[18px] text-white">
                <h3 className="text-[17px] leading-[24px] font-bold">Peta Lokasi Wisata</h3>
                <span className="mt-[4px] h-[1.5px] w-[12px] bg-white/80" />
              </div>
              <div className="flex-1 px-[19px] pt-[20px] pb-[19px]">
                <div className="relative h-[474px] w-full overflow-hidden">
                  <MapCanvas />
                  <div className="absolute top-[10px] left-[9.5px] flex w-[31px] flex-col rounded-[3px] border-[1.5px] border-black/20 bg-white bg-clip-padding font-['Liberation_Mono'] text-[21px] font-bold text-black">
                    <button className="h-[28px] border-b border-[#ccc] leading-[29px]">+</button>
                    <button className="h-[28px] leading-[32px]">−</button>
                  </div>
                  <div className="absolute right-0 bottom-0 h-[15px] bg-white/75 px-[5px] font-['Liberation_Sans',sans-serif] text-[10.45px] leading-[15px] whitespace-nowrap text-[#333]">
                    <a className="text-[#0078a8]">Leaflet</a> | © <a className="text-[#0078a8]">OpenStreetMap</a>,{" "}
                    <a className="text-[#0078a8]">ODbL</a>
                  </div>
                </div>
              </div>
            </section>
          </main>
        </div>
      </div>
    </div>
  );
}
